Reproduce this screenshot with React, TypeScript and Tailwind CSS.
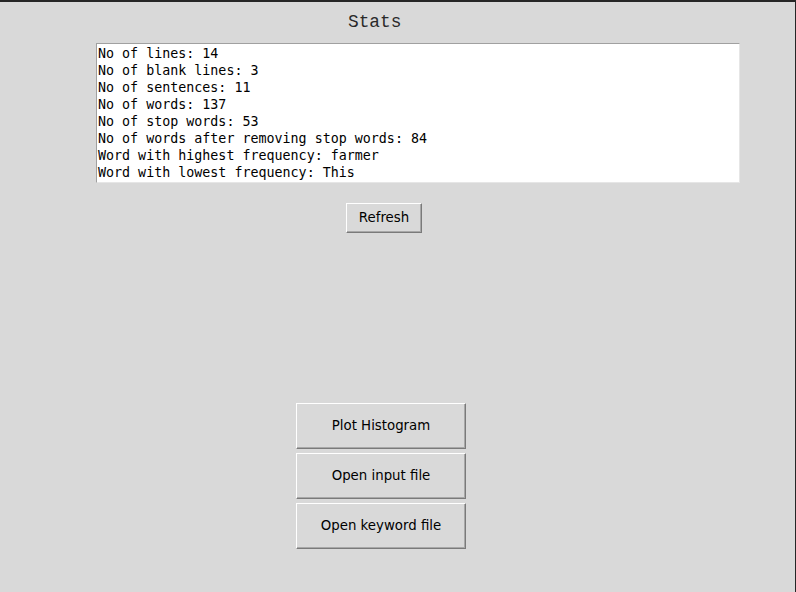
const stats = [
  "No of lines: 14",
  "No of blank lines: 3",
  "No of sentences: 11",
  "No of words: 137",
  "No of stop words: 53",
  "No of words after removing stop words: 84",
  "Word with highest frequency: farmer",
  "Word with lowest frequency: This",
];

function TkButton({ label, className }: { label: string; className: string }) {
  return (
    <button
      className={`flex items-center justify-center pb-px bg-[#d9d9d9] border border-t-white border-l-white border-r-[#7a7a7a] border-b-[#7a7a7a] shadow-[inset_-1px_-1px_0_#a8a8a8] text-[13.33px] text-black font-['DejaVu_Sans',sans-serif] ${className}`}
    >
      {label}
    </button>
  );
}

export default function App() {
  return (
    <div className="w-[796px] h-[592px] bg-[#d9d9d9] border-t-2 border-r border-[#262626] flex flex-col">
      <div className="pt-[10px] pl-[348px] h-[30px] leading-[20px] text-[17.8px] text-[#2a2a2a] font-['Liberation_Mono',monospace]">
        Stats
      </div>
      <div className="ml-[96px] mt-[11px] w-[644px] h-[140px] bg-white border border-t-[#a0a0a0] border-l-[#a0a0a0] border-r-[#e6e6e6] border-b-[#e6e6e6] pl-px pt-px font-['DejaVu_Sans_Mono',monospace] text-[13.33px] leading-[17px] text-black">
        {stats.map((s) => (
          <div key={s} className="whitespace-pre">
            {s}
          </div>
        ))}
      </div>
      <TkButton label="Refresh" className="ml-[346px] mt-[20px] w-[76px] h-[30px]" />
      <div className="ml-[296px] mt-[170px] flex flex-col gap-[4px]">
        <TkButton label="Plot Histogram" className="w-[170px] h-[46px]" />
        <TkButton label="Open input file" className="w-[170px] h-[46px]" />
        <TkButton label="Open keyword file" className="w-[170px] h-[46px]" />
      </div>
    </div>
  );
}
